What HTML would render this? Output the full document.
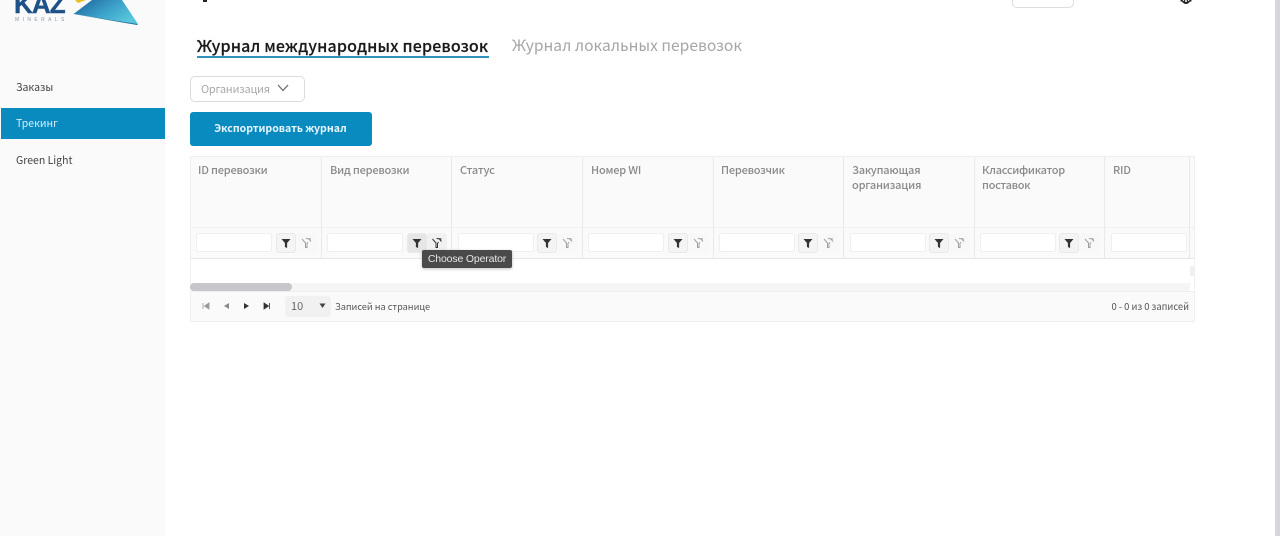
<!DOCTYPE html>
<html lang="ru"><head><meta charset="utf-8"><title>Трекинг</title>
<style>
html,body{margin:0;padding:0;width:1280px;height:536px;overflow:hidden;background:#fff;font-family:"Noto Sans CJK SC","Liberation Sans",sans-serif;}
div,span,svg{position:absolute;display:block;}
.t{white-space:nowrap;line-height:1;}
.th{color:#8a8a8a;font-size:11px;letter-spacing:-.2px;line-height:15px;font-weight:500;white-space:nowrap;}
.cell{top:157px;height:101px;width:1px;background:#e9e9e9;}
.inp{top:233px;height:19px;width:76px;box-sizing:border-box;background:#fff;border:1px solid #efefef;border-radius:2px;}
.fb{top:233px;width:20px;height:20px;background:#f4f4f4;border:1px solid #e9e9e9;border-radius:3px;box-sizing:border-box;}
.cb{top:233px;width:20px;height:20px;background:#f8f8f8;border-radius:3px;}
</style></head><body>
<div style="left:0;top:0;width:165px;height:536px;background:#fafafa"></div>
<div style="left:1px;top:108px;width:164px;height:31px;background:#0a8bc0"></div>
<svg style="left:14px;top:0" width="126" height="26" viewBox="0 0 126 26">
<defs><linearGradient id="g" x1="0" y1="0" x2="1" y2="0.6"><stop offset="0" stop-color="#1d5f98"/><stop offset="0.55" stop-color="#3a9fc8"/><stop offset="1" stop-color="#58c6dc"/></linearGradient></defs>
<path d="M59.500 14 L78 0 L108 0 L124 24 Z" fill="url(#g)"/>
<path d="M59.500 14 L124 24 L123 25 Z" fill="#1f6f9a"/>
<path d="M61 0 L72 0 L64 3 Z" fill="#e8c020"/>
</svg>
<div class="t" style="left:14px;top:-8px;font-size:26px;font-weight:700;color:#1d5188;font-family:'Liberation Sans',sans-serif;letter-spacing:-.9px;line-height:24px;-webkit-text-stroke:.4px #1d5188">KAZ</div>
<div class="t" style="left:15px;top:18px;font-size:5px;color:#8a9aa8;letter-spacing:3.400px;font-family:'Liberation Sans',sans-serif">MINERALS</div>
<div class="t" style="left:16px;top:83px;font-size:10.500px;color:#444">Заказы</div>
<div class="t" style="left:16px;top:119px;font-size:10.500px;color:#d4eefa">Трекинг</div>
<div class="t" style="left:16px;top:156px;font-size:10.500px;color:#444">Green Light</div>

<div style="left:203px;top:0;width:4px;height:2px;background:#222"></div>
<div style="left:1012px;top:-6px;width:60px;height:12px;border:1px solid #ddd;border-radius:5px;background:#fff"></div>
<svg style="left:1178px;top:0" width="16" height="6" viewBox="0 0 16 6"><path d="M2.500 0.500 L4.500 1 Q8 5.500 11.500 1 L13.500 0.500" fill="none" stroke="#222" stroke-width="1.600"/><circle cx="8" cy="1" r="1.500" fill="none" stroke="#222"/></svg>
<div style="left:1275px;top:0;width:5px;height:536px;background:#d6d6dc"></div>

<div class="t" style="left:197px;top:35px;font-size:16px;line-height:20px;font-weight:500;color:#1a1a1a;letter-spacing:.16px;-webkit-text-stroke:.15px #1a1a1a">Журнал международных перевозок</div>
<div style="left:197px;top:56px;width:292px;height:2px;background:#2f93bd"></div>
<div class="t" style="left:512px;top:35px;font-size:15.600px;line-height:20px;color:#a6a6a6">Журнал локальных перевозок</div>

<div style="left:190px;top:76px;width:113px;height:24px;border:1px solid #dcdcdc;border-radius:5px;background:#fff"></div>
<div class="t" style="left:201px;top:84px;font-size:11px;letter-spacing:-.25px;color:#a8a8a8">Организация</div>
<svg style="left:277px;top:84px" width="12" height="8" viewBox="0 0 12 8"><path d="M1 1 L6 6.500 L11 1" fill="none" stroke="#666" stroke-width="1.200"/></svg>

<div style="left:190px;top:112px;width:182px;height:34px;background:#0a8bc0;border-radius:3px"></div>
<div class="t" style="left:190px;top:124px;width:181px;text-align:center;font-size:10.550px;font-weight:700;color:#e8f6fc">Экспортировать журнал</div>

<div style="left:190px;top:156px;width:1005px;height:166px;background:#fff"></div>
<div style="left:190px;top:156px;width:1005px;height:103px;background:#fafafa;box-sizing:border-box;border:1px solid #efefef"></div>
<div style="left:191px;top:227px;width:1003px;height:1px;background:#f1f1f1"></div>
<div style="left:190px;top:258px;width:1005px;height:1px;background:#e8e8e8"></div>
<div style="left:1194px;top:156px;width:1px;height:166px;background:#efefef"></div>
<div style="left:190px;top:156px;width:1px;height:166px;background:#efefef"></div>

<div class="cell" style="left:321px"></div><div class="cell" style="left:451px"></div><div class="cell" style="left:582px"></div><div class="cell" style="left:713px"></div><div class="cell" style="left:843px"></div><div class="cell" style="left:974px"></div><div class="cell" style="left:1104px"></div><div class="cell" style="left:1189px"></div>

<div class="th" style="left:198px;top:163px">ID перевозки</div>
<div class="th" style="left:330px;top:163px">Вид перевозки</div>
<div class="th" style="left:460px;top:163px">Статус</div>
<div class="th" style="left:591px;top:163px">Номер WI</div>
<div class="th" style="left:721px;top:163px">Перевозчик</div>
<div class="th" style="left:852px;top:163px">Закупающая<br>организация</div>
<div class="th" style="left:982px;top:163px;letter-spacing:-.3px">Классификатор<br>поставок</div>
<div class="th" style="left:1113px;top:163px">RID</div>

<div class="inp" style="left:196px"></div><div class="inp" style="left:327px"></div><div class="inp" style="left:458px"></div><div class="inp" style="left:588px"></div><div class="inp" style="left:719px"></div><div class="inp" style="left:850px"></div><div class="inp" style="left:980px"></div><div class="inp" style="left:1111px"></div>

<div class="fb" style="left:276px"></div><div class="cb" style="left:297px"></div>
<div class="fb" style="left:407px;background:#e6e6e6"></div><div class="cb" style="left:427px;background:#f1f1f1"></div>
<div class="fb" style="left:537px"></div><div class="cb" style="left:558px"></div>
<div class="fb" style="left:668px"></div><div class="cb" style="left:689px"></div>
<div class="fb" style="left:798px"></div><div class="cb" style="left:819px"></div>
<div class="fb" style="left:929px"></div><div class="cb" style="left:950px"></div>
<div class="fb" style="left:1059px"></div><div class="cb" style="left:1080px"></div>

<svg style="left:190px;top:233px" width="910" height="20" viewBox="0 0 910 20">
<defs>
<path id="f" d="M0 0 H9 L5.600 4 V9 L3.400 8 V4 Z" fill="#333"/>
<path id="c" d="M0 0.500 L3.500 4.500 V9 L5 9 V5 L6 3.500 M4 0 L9 0.500 M6.500 0 L9 3" fill="none" stroke="#a0a0a0" stroke-width="1"/>
<path id="d" d="M0 0.500 L3.500 4.500 V9 L5 9 V5 L6 3.500 M4 0 L9 0.500 M6.500 0 L9 3" fill="none" stroke="#333" stroke-width="1"/>
</defs>
<use href="#f" x="91.500" y="6"/><use href="#c" x="112" y="5.500"/>
<use href="#f" x="222.500" y="6"/><use href="#d" x="242.500" y="5.500"/>
<use href="#f" x="352.500" y="6"/><use href="#c" x="373" y="5.500"/>
<use href="#f" x="483.500" y="6"/><use href="#c" x="504" y="5.500"/>
<use href="#f" x="613.500" y="6"/><use href="#c" x="634" y="5.500"/>
<use href="#f" x="744.500" y="6"/><use href="#c" x="765" y="5.500"/>
<use href="#f" x="874.500" y="6"/><use href="#c" x="895" y="5.500"/>
</svg>

<div style="left:190px;top:283px;width:1000px;height:8px;background:#f5f5f5"></div>
<div style="left:190px;top:283px;width:102px;height:8px;background:#c6c6cb;border-radius:4px"></div>
<div style="left:1190px;top:266px;width:4px;height:10px;background:#f0f0f0"></div>

<div style="left:191px;top:291px;width:1003px;height:29px;background:#fafafa;border-top:1px solid #efefef;border-bottom:1px solid #efefef"></div>
<svg style="left:200px;top:300px" width="75" height="12" viewBox="0 0 75 12">
<path d="M3 3 V9 M9 3 L4.500 6 L9 9 Z" stroke="#999" fill="#999" stroke-width=".8"/>
<path d="M29 3 L24 6 L29 9 Z" fill="#888"/>
<path d="M44 3 L49 6 L44 9 Z" fill="#333"/>
<path d="M64 3 L68.500 6 L64 9 Z M69.500 3 V9" stroke="#333" fill="#333" stroke-width=".8"/>
</svg>
<div style="left:285px;top:296px;width:46px;height:21px;background:#f1f1f1;border-radius:3px"></div>
<div class="t" style="left:291px;top:301px;font-size:11px;color:#666">10</div>
<svg style="left:319px;top:303px" width="8" height="6" viewBox="0 0 8 6"><path d="M0.500 0.500 H6.500 L3.500 5 Z" fill="#444"/></svg>
<div class="t" style="left:335px;top:302px;font-size:9.200px;color:#555">Записей на странице</div>
<div class="t" style="left:1189px;top:302px;transform:translateX(-100%);font-size:9.400px;color:#555">0 - 0 из 0 записей</div>

<div style="left:422px;top:250px;width:90px;height:18px;background:#4a4a4a;border-radius:2px;box-shadow:0 1px 3px rgba(0,0,0,.25)"></div>
<div class="t" style="left:422px;top:254px;width:90px;text-align:center;font-size:10.500px;color:#e8e8e8;font-family:'Liberation Sans',sans-serif;letter-spacing:-.15px">Choose Operator</div>
</body></html>
